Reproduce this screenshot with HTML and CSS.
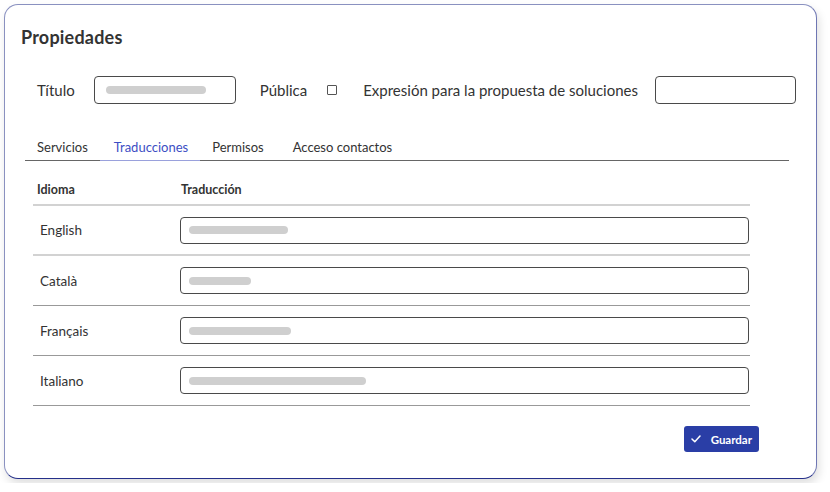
FILE: index.html
```html
<!DOCTYPE html>
<html>
<head>
    <title>Propiedades</title>
    <link rel="stylesheet" href="styles.css">
</head>
<body>
    <div class="card">
        <h2 class="card-title">Propiedades</h2>

        <div class="fields">
            <label class="field-label">Título</label>
            <div class="text-input title-input"><span class="ph" style="width: 100px;"></span></div>
            <label class="field-label public-label">Pública</label>
            <span class="checkbox"></span>
            <label class="field-label expr-label">Expresión para la propuesta de soluciones</label>
            <div class="text-input expr-input"></div>
        </div>

        <div class="tabs">
            <div class="tab">Servicios</div>
            <div class="tab active">Traducciones</div>
            <div class="tab">Permisos</div>
            <div class="tab">Acceso contactos</div>
        </div>

        <div class="table">
            <div class="row head">
                <div class="col-lang">Idioma</div>
                <div class="col-trans">Traducción</div>
            </div>
            <div class="row light">
                <div class="col-lang">English</div>
                <div class="col-trans"><div class="text-input row-input"><span class="ph" style="width: 99px;"></span></div></div>
            </div>
            <div class="row">
                <div class="col-lang">Català</div>
                <div class="col-trans"><div class="text-input row-input"><span class="ph" style="width: 62px;"></span></div></div>
            </div>
            <div class="row">
                <div class="col-lang">Français</div>
                <div class="col-trans"><div class="text-input row-input"><span class="ph" style="width: 102px;"></span></div></div>
            </div>
            <div class="row">
                <div class="col-lang">Italiano</div>
                <div class="col-trans"><div class="text-input row-input"><span class="ph" style="width: 177px;"></span></div></div>
            </div>
        </div>

        <div class="actions">
            <button class="save-btn">
                <svg class="check" width="10" height="8" viewBox="0 0 10 8"><polyline points="1,4 3.8,6.8 9,1" fill="none" stroke="#fff" stroke-width="1.5" stroke-linecap="round" stroke-linejoin="round"/></svg>
                <span>Guardar</span>
            </button>
        </div>
    </div>
</body>
</html>
```

FILE: styles.css
```css
body {
    margin: 0;
    background-color: #fff;
    font-family: Lato, "Noto Sans", sans-serif;
    color: #333;
}
.card {
    box-sizing: border-box;
    margin: 4px;
    width: 813px;
    height: 475px;
    border: 1.5px solid #8a91c0;
    border-right-color: #6e76b3;
    border-bottom-color: #25308a;
    border-radius: 14px;
    background-color: #fff;
    box-shadow: 2px 5px 10px rgba(0, 0, 0, 0.13);
    display: flex;
    flex-direction: column;
}
.card-title {
    margin: 22px 0 0 16px;
    font-size: 18px;
    line-height: 20px;
    font-weight: 700;
    color: #333;
    letter-spacing: 0.2px;
}
.fields {
    display: flex;
    align-items: center;
    margin-top: 29px;
    padding-left: 32px;
    height: 28px;
    white-space: nowrap;
}
.field-label {
    font-size: 15px;
    color: #333;
    flex-shrink: 0;
}
.text-input {
    box-sizing: border-box;
    border: 1px solid #4a4a4a;
    border-radius: 4px;
    height: 28px;
    display: flex;
    align-items: center;
    padding-left: 11px;
    background-color: #fff;
    flex-shrink: 0;
}
.title-input {
    width: 142px;
    margin-left: 19px;
}
.public-label {
    margin-left: 24px;
}
.checkbox {
    box-sizing: border-box;
    width: 10px;
    height: 10px;
    border: 1px solid #555;
    border-radius: 1px;
    margin-left: 20px;
    flex-shrink: 0;
}
.expr-label {
    margin-left: 26px;
}
.expr-input {
    width: 141px;
    margin-left: auto;
    margin-right: 20px;
}
.ph {
    display: block;
    height: 8px;
    border-radius: 4px;
    background-color: #cfcfcf;
}
.tabs {
    display: flex;
    margin: 35px 27px 0 20px;
    border-bottom: 1px solid #666;
    white-space: nowrap;
}
.tab {
    font-size: 13px;
    padding: 0 12px 5px 12px;
    color: #333;
    margin-bottom: -1px;
    border-bottom: 1px solid transparent;
}
.tab.active {
    color: #3c4ec4;
    border-bottom-color: #9aa1dc;
    padding-left: 14px;
}
.tabs .tab:nth-child(4) {
    padding-left: 17px;
}
.table {
    margin: 14px 0 0 28px;
    width: 717px;
}
.row {
    box-sizing: border-box;
    display: flex;
    align-items: center;
    height: 50px;
    border-bottom: 1px solid #999;
}
.row.head {
    height: 31px;
    border-bottom: 2px solid #d2d2d2;
    font-weight: 700;
    color: #333;
}
.row.light {
    border-bottom: 2px solid #d2d2d2;
}
.col-lang {
    width: 147px;
    padding-left: 7px;
    box-sizing: border-box;
    font-size: 13.5px;
}
.head .col-lang {
    padding-left: 4px;
}
.head .col-lang,
.head .col-trans {
    font-size: 12.5px;
}
.col-trans {
    flex: 1;
    padding-right: 1px;
}
.head .col-trans {
    padding-left: 1px;
}
.row-input {
    width: 569px;
    height: 27px;
    padding-left: 8px;
}
.actions {
    display: flex;
    justify-content: flex-end;
    margin: 20px 57px 0 0;
}
.save-btn {
    display: flex;
    align-items: center;
    height: 26px;
    padding: 0 7px 0 7px;
    background-color: #2a3ea6;
    color: #fff;
    border: none;
    border-radius: 3px;
    font-family: Lato, "Noto Sans", sans-serif;
    font-size: 11.5px;
    font-weight: 700;
}
.check {
    flex-shrink: 0;
    margin-right: 10px;
}
```
